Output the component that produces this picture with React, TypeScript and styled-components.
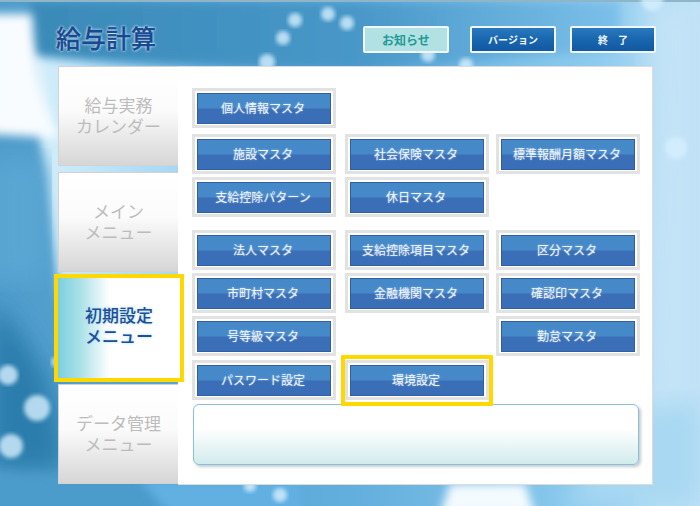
import React from "react";
import styled, { createGlobalStyle } from "styled-components";

const Global = createGlobalStyle`
  html, body { margin: 0; padding: 0; background: #6fb5e0; }
  body { font-family: "Liberation Sans", "Noto Sans CJK JP", sans-serif; }
`;

const Page = styled.div`
  position: relative;
  width: 700px;
  height: 506px;
  overflow: hidden;
  padding-top: 1px;
  box-sizing: border-box;
`;

const Backdrop = styled.svg`
  position: absolute;
  inset: 0;
  width: 700px;
  height: 506px;
`;

const Header = styled.header`
  position: relative;
  height: 65px;
  display: flex;
  align-items: flex-start;
  padding-left: 56px;
  width: 600px;
`;

const Title = styled.h1`
  margin: 19px 0 0;
  font-size: 25px;
  line-height: 38px;
  font-weight: 500;
  color: #164a92;
  -webkit-text-stroke: 0.4px #164a92;
  text-shadow: 0 0 2px #fff, 0 0 3px #e4f4ff;
  flex: 1;
`;

const HeaderButtons = styled.nav`
  display: flex;
  margin: 25px 0 0;
`;

const HeaderButton = styled.div<{ $notice?: boolean; $left: number }>`
  box-sizing: border-box;
  width: 86px;
  height: 27px;
  margin-left: ${(p) => p.$left}px;
  display: flex;
  align-items: center;
  justify-content: center;
  border: 2px solid #f0f6fa;
  border-radius: 2px;
  white-space: pre;
  font-size: ${(p) => (p.$notice ? "12px" : "10px")};
  font-weight: 700;
  color: ${(p) => (p.$notice ? "#1f9a96" : "#f2f6fb")};
  background: ${(p) =>
    p.$notice ? "#b1e1e3" : "linear-gradient(#2a78bd 0%, #1a68b0 45%, #1258a2 100%)"};
`;

const Main = styled.main`
  position: relative;
  margin-left: 58px;
  width: 595px;
  height: 419px;
  display: flex;
`;

const Tabs = styled.div`
  width: 120px;
  display: flex;
  flex-direction: column;
  gap: 6px;
`;

const Tab = styled.div<{ $active?: boolean }>`
  position: relative;
  box-sizing: border-box;
  height: 100px;
  width: ${(p) => (p.$active ? "122px" : "120px")};
  z-index: ${(p) => (p.$active ? 2 : 0)};
  display: flex;
  flex-direction: column;
  align-items: center;
  justify-content: center;
  padding: ${(p) => (p.$active ? "0 0 2px" : "1px 0 0")};
  font-size: 17px;
  line-height: 21px;
  text-align: center;
  color: ${(p) => (p.$active ? "#1d4f98" : "#bcbcbc")};
  font-weight: ${(p) => (p.$active ? 500 : 400)};
  text-shadow: ${(p) => (p.$active ? "0 0 3px #9fd4f0" : "none")};
  background: ${(p) =>
    p.$active
      ? "linear-gradient(90deg, #7ccfdf 0%, #a9e0e8 18%, #fff 42%)"
      : "linear-gradient(#fff 0%, #fbfbfb 45%, #d6d6d6 100%)"};
  border: ${(p) => (p.$active ? "none" : "1px solid #d2d2d2")};
  border-right: none;
  outline: ${(p) => (p.$active ? "4px solid #ffd800" : "none")};
`;

const Content = styled.section`
  flex: 1;
  box-sizing: border-box;
  background: #fff;
  border: 1px solid #dcdcdc;
  border-left: none;
  padding: 21px 0 0 14px;
`;

const Row = styled.div<{ $gap: number }>`
  display: grid;
  grid-template-columns: 153px 151px 145px;
  height: 40px;
  margin-top: ${(p) => p.$gap}px;
`;

const Frame = styled.div<{ $selected?: boolean }>`
  position: relative;
  z-index: ${(p) => (p.$selected ? 1 : 0)};
  box-sizing: border-box;
  width: 144px;
  height: 40px;
  border: 3px solid #e2e2e2;
  padding: 2px;
  background: #fff;
  &::after {
    content: "";
    display: ${(p) => (p.$selected ? "block" : "none")};
    position: absolute;
    inset: -8px -7px -9px -7px;
    border: 4px solid #ffd800;
    border-radius: 1px;
  }
`;

const MasterButton = styled.div`
  box-sizing: border-box;
  height: 31px;
  display: flex;
  align-items: center;
  justify-content: center;
  border: 1px solid #2f5fa6;
  padding: 0 2px 3px 0;
  font-size: 12px;
  color: #f1f6fd;
  text-shadow: 0 0 2px rgba(220, 235, 255, 0.6);
  background: linear-gradient(#4689c9 0%, #4689c9 48%, #3a6eb6 52%, #3a6eb6 100%);
`;

const MessageBox = styled.div`
  box-sizing: border-box;
  width: 446px;
  height: 61px;
  margin: 4px 0 0 1px;
  border: 1px solid #8bbfd6;
  border-radius: 6px;
  background: linear-gradient(#fff 0%, #fff 40%, #e8f5f5 70%, #d2ebee 100%);
  box-shadow: 2px 2px 3px rgba(80, 110, 130, 0.35);
`;

const rows: { gap: number; items: (string | null)[] }[] = [
  { gap: 0, items: ["個人情報マスタ", null, null] },
  { gap: 6, items: ["施設マスタ", "社会保険マスタ", "標準報酬月額マスタ"] },
  { gap: 3, items: ["支給控除パターン", "休日マスタ", null] },
  { gap: 13, items: ["法人マスタ", "支給控除項目マスタ", "区分マスタ"] },
  { gap: 3, items: ["市町村マスタ", "金融機関マスタ", "確認印マスタ"] },
  { gap: 3, items: ["号等級マスタ", null, "勤怠マスタ"] },
  { gap: 4, items: ["パスワード設定", "環境設定", null] },
];

const spots: [number, number, number][] = [
  [295, 20, 7], [328, 14, 7], [283, 38, 7], [267, 62, 8], [347, 23, 7],
  [652, 0, 11], [676, 148, 11], [428, 55, 7], [466, 65, 7],
  [8, 375, 10], [37, 408, 13], [11, 446, 12], [280, 495, 7], [250, 486, 6],
  [56, 362, 5],
];

export default function App() {
  return (
    <Page>
      <Global />
      <Backdrop viewBox="0 0 700 506">
        <defs>
          <linearGradient id="base" x1="0" x2="1" y1="0" y2="0">
            <stop offset="0" stopColor="#4f9ccb" />
            <stop offset="0.5" stopColor="#62aedd" />
            <stop offset="0.85" stopColor="#8dcbee" />
            <stop offset="1" stopColor="#c0e2f6" />
          </linearGradient>
          <linearGradient id="top" x1="0" x2="1" y1="0" y2="0">
            <stop offset="0" stopColor="#3a8ab8" />
            <stop offset="0.55" stopColor="#4797c8" />
            <stop offset="1" stopColor="#7cc0ea" />
          </linearGradient>
          <linearGradient id="sheen" x1="0" x2="1" y1="0" y2="0">
            <stop offset="0" stopColor="#d6effb" />
            <stop offset="1" stopColor="#7cc4ee" />
          </linearGradient>
          <filter id="b4"><feGaussianBlur stdDeviation="5" /></filter>
          <filter id="b12"><feGaussianBlur stdDeviation="12" /></filter>
          <filter id="b2"><feGaussianBlur stdDeviation="2.2" /></filter>
        </defs>
        <rect width="700" height="506" fill="url(#base)" />
        <path d="M30 2 H620 V50 C500 56 420 72 330 70 L30 56 Z" fill="url(#top)" filter="url(#b4)" />
        <path d="M30 56 C120 66 200 70 300 76 V300 H60 Z" fill="url(#sheen)" filter="url(#b4)" />
        <path d="M650 0 H700 V506 H640 Z" fill="#c3e3f7" filter="url(#b12)" />
        <path d="M640 410 L700 400 V506 H560 Z" fill="#a8d8f2" filter="url(#b12)" />
        <path d="M-10 14 H32 C34 50 40 100 60 138 L-10 134 Z" fill="#f8fcff" filter="url(#b4)" />
        <path d="M-10 160 H46 V280 H-10 Z" fill="#5aa6d3" filter="url(#b12)" />
        <path d="M-10 300 C30 340 60 380 66 470 L-10 470 Z" fill="#2b7dac" filter="url(#b12)" />
        <path d="M-10 470 C60 485 150 470 250 470 V520 H-10 Z" fill="#4c9bcb" filter="url(#b4)" />
        <path d="M140 480 L300 480 V515 H170 Z" fill="#62b0e2" filter="url(#b4)" />
        <path d="M450 484 H525 L535 515 H440 Z" fill="#f4fbff" filter="url(#b4)" />
        <rect width="700" height="2" fill="#8fb6c8" />
        {spots.map(([cx, cy, r]) => (
          <circle key={`${cx}-${cy}`} cx={cx} cy={cy} r={r} fill="#d6f0ff" opacity={0.8} filter="url(#b2)" />
        ))}
      </Backdrop>
      <Header>
        <Title>給与計算</Title>
        <HeaderButtons>
          <HeaderButton $notice $left={0}>お知らせ</HeaderButton>
          <HeaderButton $left={21}>バージョン</HeaderButton>
          <HeaderButton $left={14}>{"終　了"}</HeaderButton>
        </HeaderButtons>
      </Header>
      <Main>
        <Tabs>
          <Tab>給与実務<br />カレンダー</Tab>
          <Tab>メイン<br />メニュー</Tab>
          <Tab $active>初期設定<br />メニュー</Tab>
          <Tab>データ管理<br />メニュー</Tab>
        </Tabs>
        <Content>
          {rows.map((row) => (
            <Row key={row.items.join()} $gap={row.gap}>
              {row.items.map((label, i) =>
                label ? (
                  <Frame key={label} $selected={label === "環境設定"}>
                    <MasterButton>{label}</MasterButton>
                  </Frame>
                ) : (
                  <div key={i} />
                )
              )}
            </Row>
          ))}
          <MessageBox />
        </Content>
      </Main>
    </Page>
  );
}
